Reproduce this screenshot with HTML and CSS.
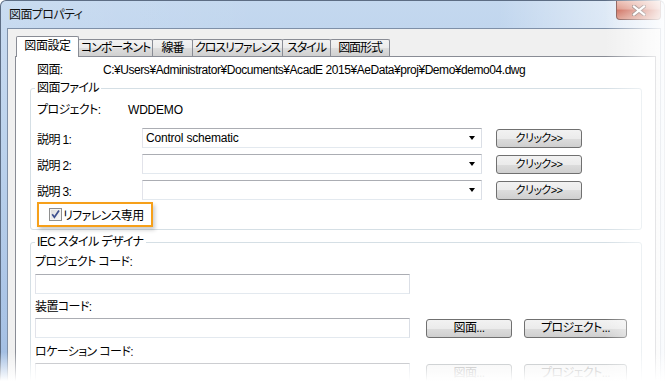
FILE: index.html
```html
<!DOCTYPE html>
<html lang="ja">
<head>
<meta charset="utf-8">
<title>図面プロパティ</title>
<link rel="stylesheet" href="styles.css">
</head>
<body>
<div class="window">
	<div class="titlebar">
		<span class="title">図面プロパティ</span>
		<div class="close">
			<svg width="14" height="11" viewBox="0 0 14 11">
				<path d="M2 1.5 L12 9.5 M12 1.5 L2 9.5" stroke="#6a4a45" stroke-width="4" stroke-linecap="square"/>
				<path d="M2 1.5 L12 9.5 M12 1.5 L2 9.5" stroke="#fff" stroke-width="2.2" stroke-linecap="square"/>
			</svg>
		</div>
	</div>
	<div class="client">
		<div class="tabs">
			<div class="tab active" style="width:63px">図面設定</div>
			<div class="tab" style="width:75px">コンポーネント</div>
			<div class="tab" style="width:41px">線番</div>
			<div class="tab" style="width:91px">クロスリファレンス</div>
			<div class="tab" style="width:49px">スタイル</div>
			<div class="tab" style="width:60px">図面形式</div>
		</div>
		<div class="page">
			<div class="drawing">
				<span class="drawing-label">図面:</span>
				<span class="path">C:¥Users¥Administrator¥Documents¥AcadE 2015¥AeData¥proj¥Demo¥demo04.dwg</span>
			</div>

			<div class="group file-group">
				<div class="legend">図面ファイル</div>
				<div class="project">
					<span class="project-label">プロジェクト:</span>
					<span class="latin">WDDEMO</span>
				</div>
				<div class="descs">
					<div class="desc">
						<span class="desc-label">説明 1:</span>
						<div class="combo"><span class="latin">Control schematic</span><span class="arrow"></span></div>
						<button class="btn click-btn">クリック&gt;&gt;</button>
					</div>
					<div class="desc">
						<span class="desc-label">説明 2:</span>
						<div class="combo"><span></span><span class="arrow"></span></div>
						<button class="btn click-btn">クリック&gt;&gt;</button>
					</div>
					<div class="desc">
						<span class="desc-label">説明 3:</span>
						<div class="combo"><span></span><span class="arrow"></span></div>
						<button class="btn click-btn">クリック&gt;&gt;</button>
					</div>
				</div>
				<div class="check">
					<svg width="13" height="13" viewBox="0 0 13 13">
						<defs>
							<linearGradient id="cb" x1="0" y1="0" x2="1" y2="1">
								<stop offset="0" stop-color="#dcdcdc"/>
								<stop offset="1" stop-color="#f8f8f8"/>
							</linearGradient>
						</defs>
						<rect x="0.5" y="0.5" width="12" height="12" fill="#f4f4f4" stroke="#8e8f8f"/>
						<rect x="2" y="2" width="9" height="9" fill="url(#cb)"/>
						<path d="M3.2 6.3 L5.4 9.2 L10 2.6" fill="none" stroke="#3d4f8e" stroke-width="1.7"/>
					</svg>
					<span>リファレンス専用</span>
				</div>
			</div>

			<div class="group iec-group">
				<div class="legend">IEC スタイル デザイナ</div>
				<div class="field-label first">プロジェクト コード:</div>
				<div class="field-row first-row">
					<div class="textbox"></div>
				</div>
				<div class="field-label">装置コード:</div>
				<div class="field-row">
					<div class="textbox"></div>
					<button class="btn dwg-btn">図面...</button>
					<button class="btn proj-btn">プロジェクト...</button>
				</div>
				<div class="field-label loc">ロケーション コード:</div>
				<div class="field-row">
					<div class="textbox"></div>
					<button class="btn dwg-btn" disabled>図面...</button>
					<button class="btn proj-btn" disabled>プロジェクト...</button>
				</div>
			</div>
		</div>
	</div>
</div>
</body>
</html>
```

FILE: styles.css
```css
* {
	box-sizing: border-box;
}
html, body {
	margin: 0;
}
body {
	position: relative;
	width: 672px;
	height: 382px;
	overflow: hidden;
	background: #fff;
	font-family: "Liberation Sans", "Noto Sans CJK JP", sans-serif;
	font-size: 12px;
	letter-spacing: -0.6px;
	color: #000;
	font-feature-settings: "palt" 1;
}
/* fade to white at the bottom and the right edge */
body::after {
	content: "";
	position: absolute;
	left: 0;
	top: 0;
	width: 672px;
	height: 382px;
	pointer-events: none;
	background:
		linear-gradient(to bottom, rgba(255,255,255,0) 352px, #fff 381px),
		linear-gradient(to right, rgba(255,255,255,0) 605px, #fff 670px);
}
.latin {
	letter-spacing: -0.2px;
}
.window {
	width: 665px;
	height: 420px;
	padding: 0 3px 0 6px;
	border: 1px solid #5d6d84;
	border-bottom: none;
	border-radius: 6px 6px 0 0;
	background:
		linear-gradient(to right, rgba(255,255,255,.1) 0, rgba(255,255,255,0) 40%, rgba(255,255,255,0) 75%, rgba(255,255,255,.5) 93%),
		linear-gradient(#c4d8ef, #b4cdea 35%, #a0bde3 75%, #8fb0dc);
}
.titlebar {
	display: flex;
	height: 27px;
}
.title {
	margin: 7px 0 0 2px;
	line-height: 14px;
	color: #111;
}
.close {
	display: flex;
	align-items: center;
	justify-content: center;
	margin-left: auto;
	width: 45px;
	height: 19px;
	border: 1px solid #7d4a44;
	border-top: none;
	border-radius: 0 0 4px 4px;
	background: linear-gradient(#e8b3a6, #d98877 45%, #c85a47 50%, #d9907f);
}
.client {
	height: 400px;
	border: 1px solid #7f90a8;
	border-bottom: none;
	background: #f0f0f0;
}
.tabs {
	display: flex;
	align-items: flex-end;
	margin-top: 7px;
	padding-left: 8px;
}
.tab {
	height: 17px;
	margin-right: -1px;
	border: 1px solid #898c95;
	border-bottom: none;
	border-radius: 2px 2px 0 0;
	background: linear-gradient(#f3f3f3, #ebebeb 50%, #dedede 50%, #d0d0d0);
	text-align: center;
	line-height: 16px;
	letter-spacing: -1.1px;
	white-space: nowrap;
}
.tab.active {
	position: relative;
	z-index: 1;
	height: 21px;
	margin-bottom: -1px;
	background: #fff;
	line-height: 19px;
	letter-spacing: -0.4px;
}
.page {
	height: 360px;
	margin: 0 4px 0 7px;
	padding: 6px 13px 0 14px;
	border: 1px solid #898c95;
	background: #fff;
}
.drawing {
	display: flex;
	padding-left: 7px;
	line-height: 14px;
}
.drawing-label {
	width: 66px;
}
.path {
	letter-spacing: -0.45px;
}
.group {
	border: 1px solid #d5dfe5;
	border-radius: 3px;
}
.legend {
	width: fit-content;
	margin: -8px 0 0 -2px;
	padding: 0 2px;
	background: #fff;
	line-height: 14px;
}
.file-group {
	margin-top: 11px;
	padding: 0 6px 2px 6px;
}
.project {
	display: flex;
	margin-top: 8px;
	line-height: 14px;
}
.project-label {
	width: 91px;
}
.descs {
	display: grid;
	row-gap: 6px;
	margin-top: 11px;
}
.desc {
	display: flex;
	align-items: center;
	height: 20px;
}
.desc-label {
	width: 105px;
}
.combo {
	display: flex;
	align-items: center;
	justify-content: space-between;
	width: 340px;
	height: 20px;
	padding: 0 6px 0 3px;
	border: 1px solid;
	border-color: #abadb3 #dbdfe6 #e3e9ef #e2e3ea;
	background: #fff;
}
.arrow {
	width: 0;
	height: 0;
	border-left: 3.5px solid transparent;
	border-right: 3.5px solid transparent;
	border-top: 4px solid #000;
}
.btn {
	height: 19px;
	padding: 0;
	border: 1px solid #707070;
	border-radius: 3px;
	background: linear-gradient(#f2f2f2, #ebebeb 50%, #dddddd 50%, #cfcfcf);
	font: inherit;
	letter-spacing: -0.6px;
	color: #000;
	line-height: 15px;
}
.btn:disabled {
	border-color: #adb2b5;
	background: #f4f4f4;
	color: #a0a0a0;
}
.click-btn {
	width: 86px;
	margin-left: 14px;
	font-size: 11px;
}
.check {
	display: flex;
	align-items: center;
	width: 116px;
	height: 25px;
	margin-top: 2px;
	padding-left: 10px;
	border: 2px solid #f6a01a;
	box-shadow: 2px 3px 4px rgba(0,0,0,.2);
	background: #fff;
}
.check span {
	margin-left: 1px;
}
.iec-group {
	margin-top: 12px;
	padding: 0 4px 20px 4px;
}
.iec-group .legend {
	margin-left: 0;
}
.field-label {
	margin-top: 6px;
	line-height: 14px;
}
.field-label.loc {
	margin-top: 7px;
}
.field-row {
	display: flex;
	align-items: center;
	margin-top: 4px;
}
.field-row.first-row {
	margin-top: 5px;
}
.textbox {
	width: 375px;
	height: 20px;
	border: 1px solid;
	border-color: #abadb3 #dbdfe6 #e3e9ef #e2e3ea;
	background: #fff;
}
.dwg-btn {
	width: 86px;
	margin-left: 16px;
}
.proj-btn {
	width: 103px;
	margin-left: 12px;
}
```
